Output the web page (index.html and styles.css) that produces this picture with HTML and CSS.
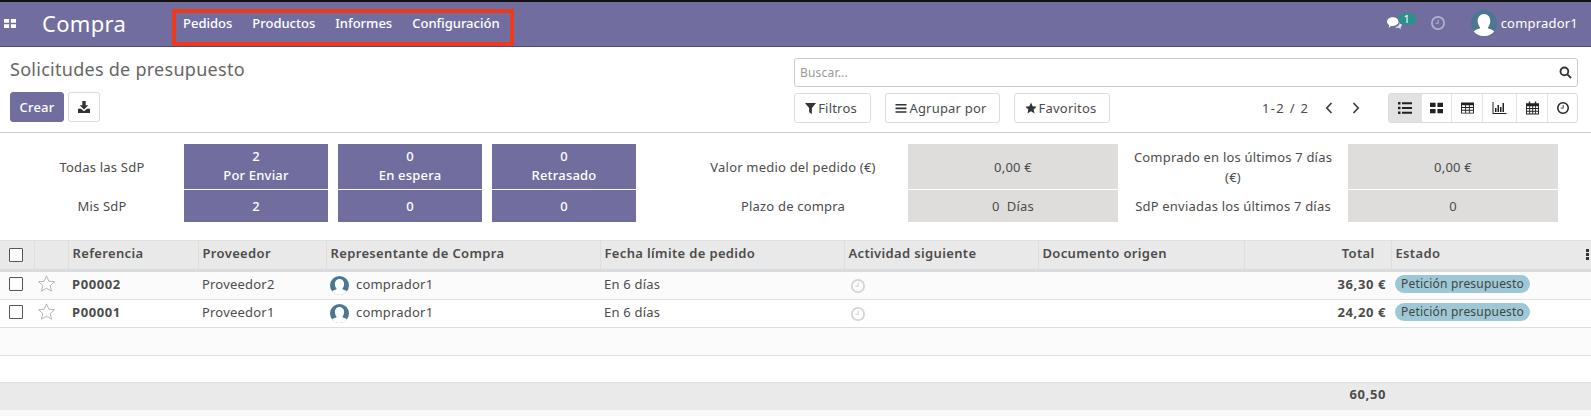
FILE: index.html
```html
<!DOCTYPE html>
<html lang="es">
<head>
<meta charset="utf-8">
<title>Compra</title>
<link rel="stylesheet" href="styles.css">
</head>
<body>
<svg class="defs" width="0" height="0" aria-hidden="true">
  <symbol id="i-grid" viewBox="0 0 14 12" preserveAspectRatio="none"><path d="M0 0h6v5H0zM8 0h6v5H8zM0 7h6v5H0zM8 7h6v5H8z"/></symbol>
  <symbol id="i-clock" viewBox="0 0 16 16"><path fill-rule="evenodd" d="M8 0a8 8 0 1 1 0 16A8 8 0 0 1 8 0zm0 2a6 6 0 1 0 0 12A6 6 0 0 0 8 2zM8.800 4v4.800H5V7.600h2.600V4z"/></symbol>
  <symbol id="i-user" viewBox="0 0 26 26"><circle cx="13" cy="13" r="13" fill="#4c7692"/><path fill="#fff" d="M13 4c3.800 0 6.300 3 6.300 7 0 3-1.200 5-2.300 6.300v1c2.500.8 5 1.700 6.200 3.200A13 13 0 0 1 13 26a13 13 0 0 1-10.200-4.500c1.200-1.500 3.700-2.400 6.200-3.200v-1C7.900 16 6.700 14 6.700 11c0-4 2.500-7 6.300-7z"/></symbol>
  <symbol id="i-star" viewBox="0 0 16 16"><path d="M8 .8l2.200 5 5.300.5-4 3.600 1.200 5.300L8 12.400l-4.700 2.800 1.200-5.300-4-3.600 5.300-.5z"/></symbol>
</svg>

<header class="topbar">
  <div class="brand">
    <svg class="apps"><use href="#i-grid"/></svg>
    <span class="app-name">Compra</span>
  </div>
  <nav class="menu">
    <a>Pedidos</a><a>Productos</a><a>Informes</a><a>Configuración</a>
  </nav>
  <div class="systray">
    <span class="chat">
      <svg viewBox="0 0 18 15" width="15" height="13"><path fill="#fff" d="M7 0c3.800 0 7 2.300 7 5.200s-3.200 5.200-7 5.200c-.6 0-1.200 0-1.700-.2L2 12.500l.8-3C1.100 8.500 0 7 0 5.200 0 2.300 3.200 0 7 0z"/><path fill="#fff" opacity=".8" d="M15 5c1.800.8 3 2.200 3 3.800 0 1.300-.8 2.400-1.800 3.200l.5 2.500-2.700-1.800c-1.600.2-3.400 0-4.500-.8 3.200-.2 6-2.400 5.500-6.900z"/></svg>
      <b class="badge">1</b>
    </span>
    <svg class="tray-clock"><use href="#i-clock"/></svg>
    <span class="user"><svg class="avatar-lg"><use href="#i-user"/></svg>comprador1</span>
  </div>
</header>

<section class="control">
  <div class="control-left">
    <h1>Solicitudes de presupuesto</h1>
    <div class="actions">
      <button class="btn primary">Crear</button>
      <button class="btn icon-only">
        <svg viewBox="0 0 14 14" width="12" height="12"><path fill="#333" d="M5 0h4v5h3L7 10 2 5h3zM0 9h3.500L7 12l3.500-3H14v5H0z"/></svg>
      </button>
    </div>
  </div>
  <div class="control-right">
    <div class="search">
      <span class="placeholder">Buscar...</span>
      <svg viewBox="0 0 14 14" width="13" height="13"><path fill="none" stroke="#333" stroke-width="2" d="M9.300 9.300L13 13M10 5.800a4.200 4.200 0 1 1-8.400 0 4.200 4.200 0 0 1 8.400 0z"/></svg>
    </div>
    <div class="tools">
      <div class="filters">
        <button class="btn f1"><svg viewBox="0 0 12 12" width="11" height="11"><path fill="#333" d="M0 0h12L7.500 5.500V12L4.500 10V5.500z"/></svg>Filtros</button>
        <button class="btn f2"><svg viewBox="0 0 12 12" width="12" height="11"><path fill="#333" d="M0 1h12v1.700H0zM0 5h12v1.700H0zM0 9h12v1.700H0z"/></svg>Agrupar por</button>
        <button class="btn f3"><svg viewBox="0 0 16 16" width="12" height="12" fill="#333"><use href="#i-star"/></svg>Favoritos</button>
      </div>
      <div class="pager">
        <span class="pager-count">1-2 / 2</span>
        <svg viewBox="0 0 8 12" width="8" height="12"><path fill="none" stroke="#444" stroke-width="1.800" d="M6.500 1L1.800 6l4.700 5"/></svg>
        <svg viewBox="0 0 8 12" width="8" height="12"><path fill="none" stroke="#444" stroke-width="1.800" d="M1.500 1l4.700 5-4.700 5"/></svg>
      </div>
      <div class="views">
        <span class="view active"><svg viewBox="0 0 14 12" width="14" height="12"><path fill="#222" d="M0 0h2.500v2.500H0zM4 .3h10v2H4zM0 4.700h2.500v2.500H0zM4 5h10v2H4zM0 9.400h2.500v2.500H0zM4 9.700h10v2H4z"/></svg></span>
        <span class="view v2"><svg viewBox="0 0 14 12" width="13" height="12" fill="#222"><use href="#i-grid"/></svg></span>
        <span class="view v3"><svg viewBox="0 0 14 12" width="13" height="12"><path fill="#222" fill-rule="evenodd" d="M0 0h14v12H0zm1 3v2h3.500V3zm4.500 0v2h3V3zm4 0v2H13V3zM1 6v2h3.500V6zm4.500 0v2h3V6zm4 0v2H13V6zM1 9v2h3.500V9zm4.500 0v2h3V9zm4 0v2H13V9z"/></svg></span>
        <span class="view v4"><svg viewBox="0 0 14 12" width="15" height="12"><path fill="#222" d="M0 0h1v11h13v1H0zM2.500 6h1.500v4H2.500zM5 3h1.500v7H5zM7.500 5H9v5H7.500zM10 1h1.500v9H10z"/></svg></span>
        <span class="view v5"><svg viewBox="0 0 14 14" width="13" height="14"><path fill="#222" fill-rule="evenodd" d="M3 0h1.500v2h5V0H11v2h3v12H0V2h3zM1 5v2h2.500V5zm3.500 0v2h2.200V5zm3.200 0v2h2.100V5zm3 0v2H13V5zM1 8v2h2.500V8zm3.500 0v2h2.200V8zm3.200 0v2h2.100V8zm3 0v2H13V8zM1 11v2h2.500v-2zm3.500 0v2h2.200v-2zm3.200 0v2h2.100v-2zm3 0v2H13v-2z"/></svg></span>
        <span class="view v6"><svg viewBox="0 0 16 16" width="12" height="12" fill="#222"><use href="#i-clock"/></svg></span>
      </div>
    </div>
  </div>
</section>

<section class="dash">
  <div class="dash-grid">
    <span class="lab lab-a">Todas las SdP</span>
    <span class="stat big">2<br>Por Enviar</span>
    <span class="stat big">0<br>En espera</span>
    <span class="stat big">0<br>Retrasado</span>
    <span class="lab lab-b">Valor medio del pedido (€)</span>
    <span class="kpi">0,00 €</span>
    <span class="lab">Comprado en los últimos 7 días (€)</span>
    <span class="kpi">0,00 €</span>

    <span class="lab lab-a">Mis SdP</span>
    <span class="stat">2</span>
    <span class="stat">0</span>
    <span class="stat">0</span>
    <span class="lab lab-b">Plazo de compra</span>
    <span class="kpi">0 &nbsp;Días</span>
    <span class="lab">SdP enviadas los últimos 7 días</span>
    <span class="kpi">0</span>
  </div>
</section>

<table class="list">
  <colgroup>
    <col class="c-check"><col class="c-star"><col class="c-ref"><col class="c-prov"><col class="c-rep"><col class="c-date"><col class="c-act"><col class="c-doc"><col class="c-total"><col>
  </colgroup>
  <thead>
    <tr>
      <th><span class="cb"></span></th><th></th><th>Referencia</th><th>Proveedor</th><th>Representante de Compra</th><th>Fecha límite de pedido</th><th>Actividad siguiente</th><th>Documento origen</th><th class="num head-total">Total</th>
      <th class="estado">Estado<span class="dots"></span></th>
    </tr>
  </thead>
  <tbody>
    <tr class="odd">
      <td><span class="cb"></span></td><td><svg class="star" viewBox="0 0 16 16"><use href="#i-star"/></svg></td><td class="strong">P00002</td><td>Proveedor2</td>
      <td><span class="rep"><svg class="avatar"><use href="#i-user"/></svg>comprador1</span></td><td>En 6 días</td>
      <td><svg class="act"><use href="#i-clock"/></svg></td><td></td><td class="num strong">36,30 €</td><td><span class="pill">Petición presupuesto</span></td>
    </tr>
    <tr>
      <td><span class="cb"></span></td><td><svg class="star" viewBox="0 0 16 16"><use href="#i-star"/></svg></td><td class="strong">P00001</td><td>Proveedor1</td>
      <td><span class="rep"><svg class="avatar"><use href="#i-user"/></svg>comprador1</span></td><td>En 6 días</td>
      <td><svg class="act"><use href="#i-clock"/></svg></td><td></td><td class="num strong">24,20 €</td><td><span class="pill">Petición presupuesto</span></td>
    </tr>
    <tr class="odd empty"><td colspan="10"></td></tr>
    <tr class="empty"><td colspan="10"></td></tr>
  </tbody>
  <tfoot>
    <tr><td colspan="8"></td><td class="num strong">60,50</td><td></td></tr>
  </tfoot>
</table>
</body>
</html>
```
FILE: styles.css
```css
*, *::before, *::after { box-sizing: border-box; }
html, body { margin: 0; padding: 0; }
body {
  width: 1591px;
  height: 416px;
  overflow: hidden;
  background: #f9f9f9;
  color: #4c4c4c;
  font-family: "Noto Sans", "Open Sans", sans-serif;
  font-size: 13px;
  letter-spacing: .2px;
}
.defs { position: absolute; }

.topbar {
  height: 47px;
  display: flex;
  align-items: center;
  padding-bottom: 2px;
  background: #716e9f;
  border-top: 2px solid #111;
  border-bottom: 1px solid #4f4c85;
  color: #fff;
  position: relative;
}
.brand { display: flex; align-items: center; width: 183px; }
.apps { width: 12px; height: 9px; margin-left: 4px; fill: #fff; }
.app-name { font-size: 22px; margin-left: 26px; letter-spacing: .3px; }
.menu { display: flex; align-items: center; gap: 20px; font-weight: 500; letter-spacing: 0; }
.menu::after {
  content: "";
  position: absolute;
  left: 172px;
  top: 7px;
  width: 342px;
  height: 37px;
  border: 4px solid #ee3a1c;
}
.systray { margin-left: auto; display: flex; align-items: center; padding-right: 13px; }
.chat { display: flex; align-items: center; position: relative; width: 32px; }
.badge {
  position: absolute; left: 11px; top: -4px;
  width: 18px; height: 12px; line-height: 11px;
  border-radius: 6px; background: #2f8f8c;
  font-size: 11px; font-weight: 400; text-align: center;
}
.tray-clock { width: 14px; height: 14px; fill: #b3b1cd; margin-left: 12px; }
.user { display: flex; align-items: center; gap: 4px; margin-left: 26px; }
.avatar-lg { width: 26px; height: 26px; }

.control {
  height: 86px;
  background: #fff;
  border-bottom: 1px solid #ccc;
  display: flex;
  justify-content: space-between;
  padding: 0 13px 0 10px;
}
h1 { font-size: 18px; font-weight: 400; margin: 9px 0 0; line-height: 26px; color: #666; letter-spacing: .27px; }
.actions { display: flex; gap: 4px; margin-top: 10px; }
.btn {
  display: inline-flex; align-items: center; justify-content: center; gap: 2px;
  height: 30px; padding: 0 3px 0 0; background: #fff;
  border: 1px solid #dcdcdc; border-radius: 3px;
  font: inherit; color: #4c4c4c; letter-spacing: inherit;
}
.btn.primary { width: 54px; padding: 0; background: #716e9f; border-color: #716e9f; color: #fff; font-weight: 500; }
.btn.icon-only { width: 32px; padding: 0; }
.control-right { width: 784px; }
.search {
  margin-top: 11px; height: 29px;
  display: flex; align-items: center; justify-content: space-between;
  padding: 0 5px;
  border: 1px solid #ccc; border-radius: 3px;
}
.placeholder { color: #999; font-size: 12px; }
.tools { display: flex; align-items: center; margin-top: 6px; }
.filters { display: flex; gap: 14px; }
.f1 { width: 77px; } .f2 { width: 115px; } .f3 { width: 96px; }
.pager { display: flex; align-items: center; margin-left: 152px; width: 127px; }
.pager-count { letter-spacing: 1.300px; }
.pager svg:first-of-type { margin-left: 16px; }
.pager svg:last-of-type { margin-left: 19px; }
.views {
  display: flex; height: 30px; margin-left: auto;
  border: 1px solid #dcdcdc; border-radius: 3px;
}
.view { display: flex; align-items: center; justify-content: center; width: 31px; border-left: 1px solid #e4e4e4; }
.view.active { background: #e2e2e2; border-left: 0; width: 32px; }
.v2 { width: 30px; }
.v4 { width: 34px; }
.v6 { width: 30px; }

.dash { height: 107px; background: #fff; padding-top: 11px; }
.dash-grid {
  display: grid;
  grid-template-columns: 184px 154px 154px 144px 272px 210px 230px 210px;
  grid-template-rows: 45px 32px;
  row-gap: 1px;
}
.lab { display: flex; align-items: center; justify-content: center; text-align: center; line-height: 20px; padding: 0 12px; }
.lab-a { padding: 0 0 0 20px; }
.lab-b { padding: 0 0 0 42px; }
.stat {
  width: 144px;
  background: #716e9f; color: #fff; font-weight: 500;
  display: flex; align-items: center; justify-content: center; text-align: center; line-height: 19px;
}
.stat.big { display: block; padding-top: 3px; }
.kpi { background: #dedddc; display: flex; align-items: center; justify-content: center; }

.list { width: 100%; border-collapse: collapse; table-layout: fixed; background: #fff; }
.c-check { width: 34px; } .c-star { width: 34px; } .c-ref { width: 130px; } .c-prov { width: 128px; }
.c-rep { width: 274px; } .c-date { width: 244px; } .c-act { width: 194px; } .c-doc { width: 206.500px; } .c-total { width: 146.500px; }
th {
  height: 30px; padding: 0 4px 4px; text-align: left; font-weight: 600; background: #e9e9e9;
  border-top: 1px solid #dfdfdf; border-bottom: 3px solid #d8dcdf; border-left: 1px solid #dedede;
  white-space: nowrap; position: relative; letter-spacing: .35px;
}
th:first-child { border-left: 0; }
td { height: 28px; padding: 0 5px 4px 4px; border-bottom: 1px solid #dfdfdf; white-space: nowrap; vertical-align: middle; }
tr.odd td { background: #fbfbfb; }
tr.empty td { height: 27.500px; }
.num { text-align: right; }
th.num { padding-right: 16px; }
.strong { font-weight: 700; letter-spacing: .6px; }
.cb { display: block; width: 14px; height: 14px; margin-left: 5px; border: 1.500px solid #555; border-radius: 1px; background: #fff; }
th .cb { margin-top: 3px; }
.star { display: block; width: 17px; height: 17px; fill: #fff; stroke: #a8a8a8; stroke-width: .8; margin-left: 0; }
.rep { display: flex; align-items: center; gap: 7px; }
.avatar { width: 19px; height: 19px; margin-top: 4px; }
.act { display: block; width: 14px; height: 14px; fill: #d4d4d4; margin: 4px 0 0 3px; }
.pill { display: inline-block; height: 18px; line-height: 17px; padding: 0 6px; border-radius: 9px; background: #9dc9d6; color: #444; font-size: 12px; }
.dots {
  position: absolute; right: 2px; top: 8px; width: 3px; height: 3px; background: #333;
  box-shadow: 0 4px 0 #333, 0 8px 0 #333;
}
tfoot td { height: 27px; background: #eaeaea; border: 0; }
```
